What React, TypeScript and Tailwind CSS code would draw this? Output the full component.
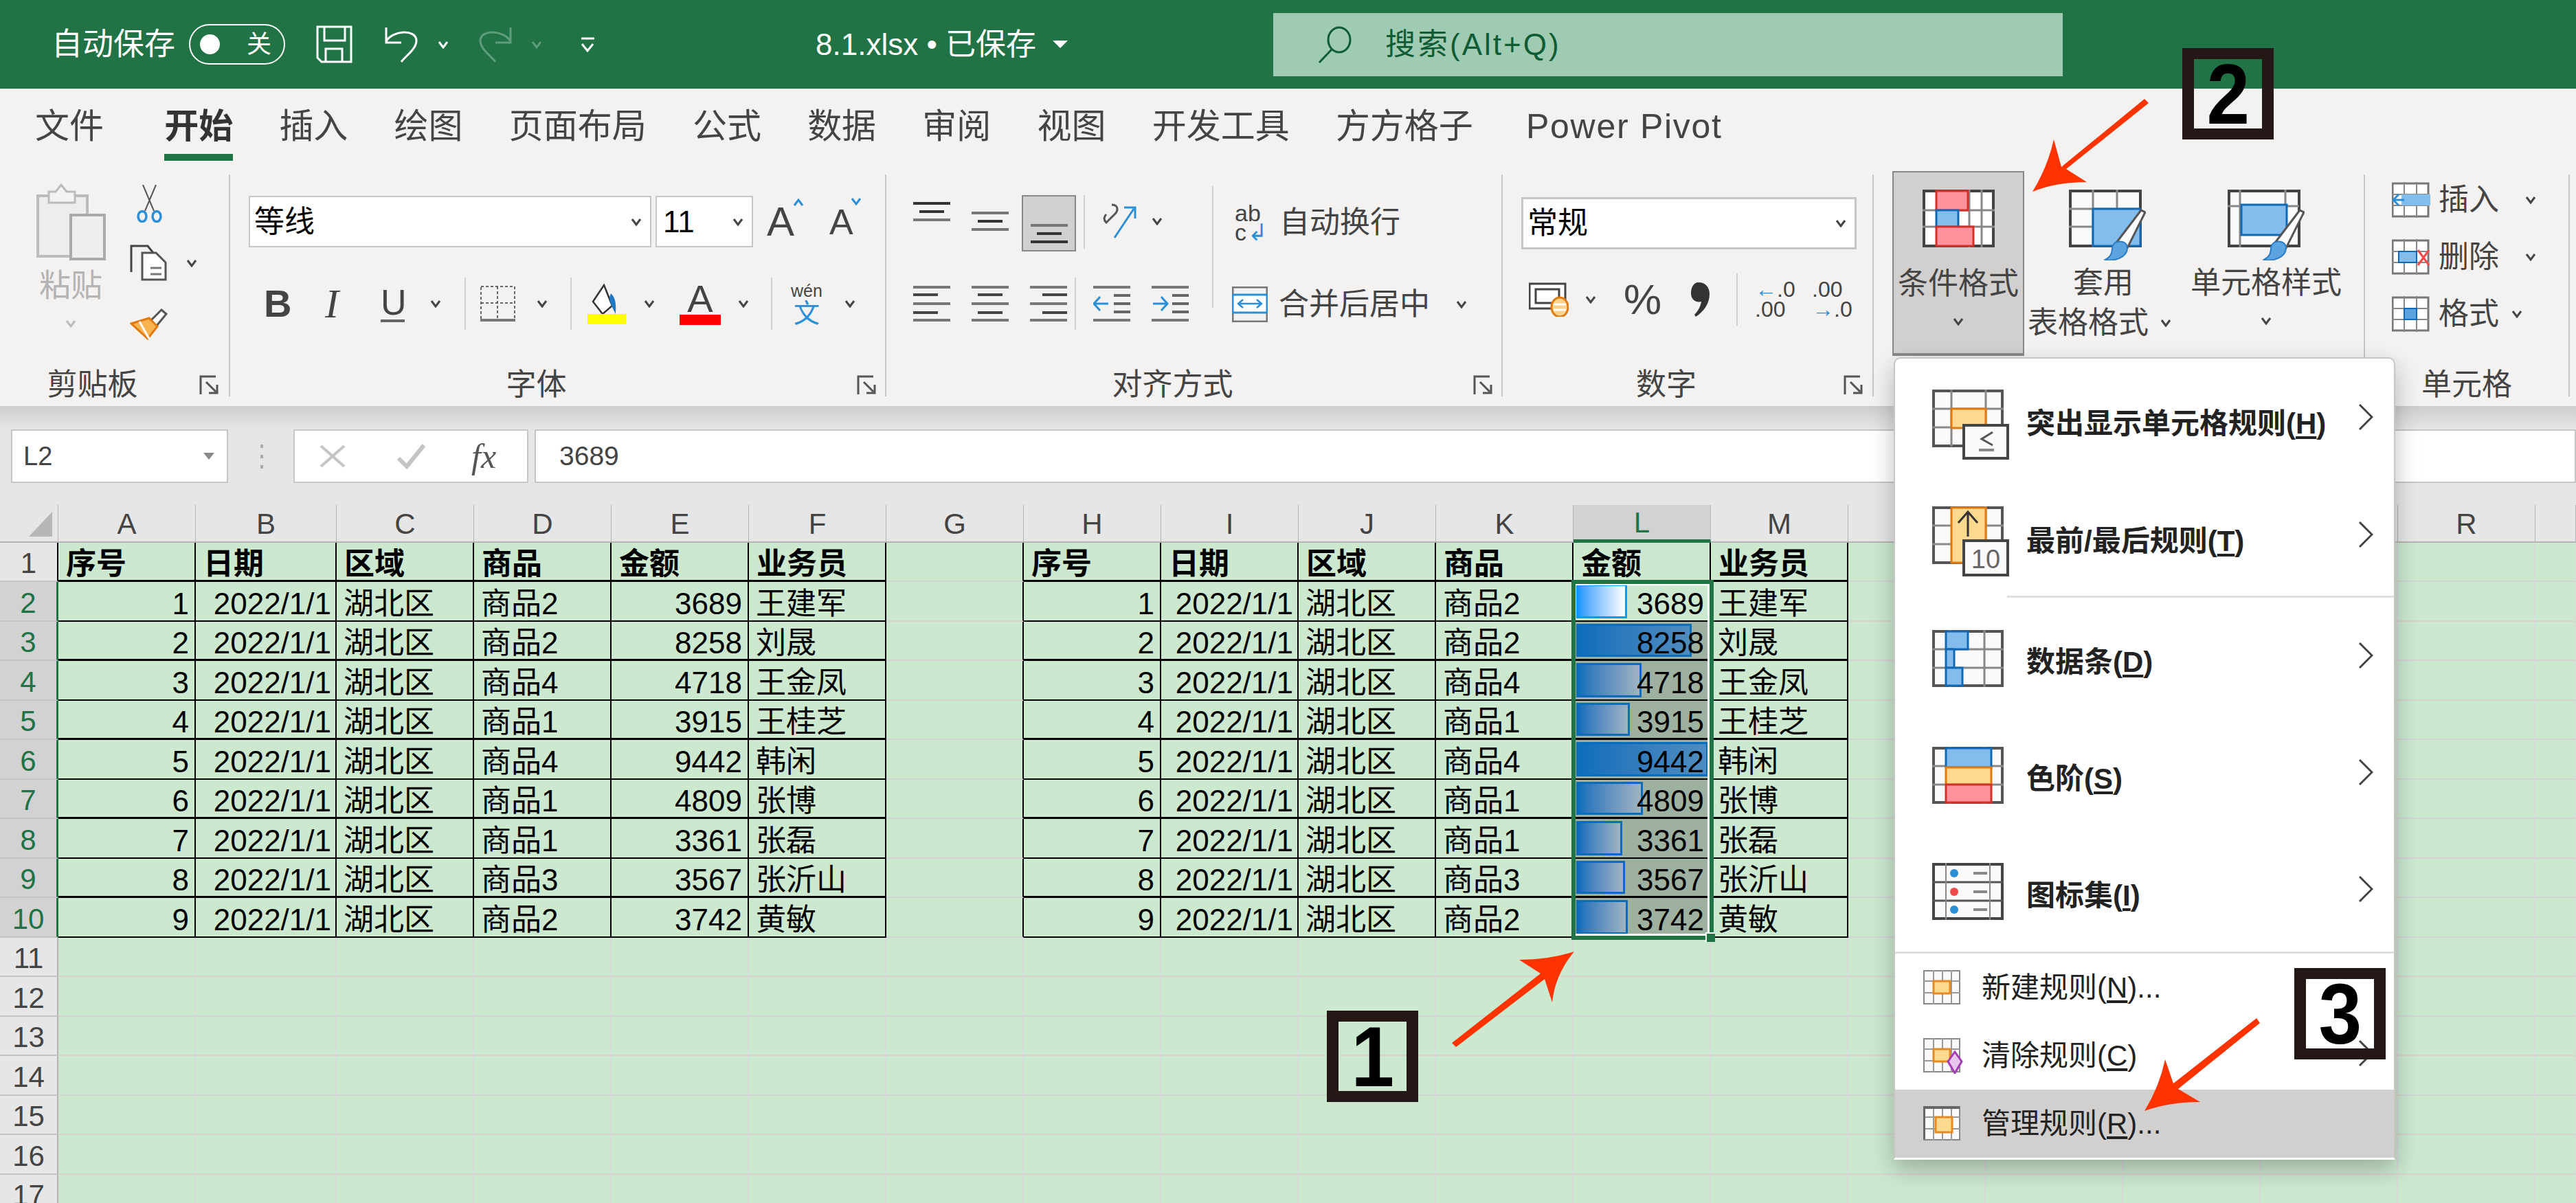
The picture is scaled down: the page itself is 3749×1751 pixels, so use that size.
import clsx from "clsx";

/* ─── Data ─── */
const sales = [
  { id: 1, amount: 3689, product: "商品2", rep: "王建军" },
  { id: 2, amount: 8258, product: "商品2", rep: "刘晟" },
  { id: 3, amount: 4718, product: "商品4", rep: "王金凤" },
  { id: 4, amount: 3915, product: "商品1", rep: "王桂芝" },
  { id: 5, amount: 9442, product: "商品4", rep: "韩闲" },
  { id: 6, amount: 4809, product: "商品1", rep: "张博" },
  { id: 7, amount: 3361, product: "商品1", rep: "张磊" },
  { id: 8, amount: 3567, product: "商品3", rep: "张沂山" },
  { id: 9, amount: 3742, product: "商品2", rep: "黄敏" },
];
const headers = ["序号", "日期", "区域", "商品", "金额", "业务员"];
const letters = "ABCDEFGHIJKLMNOPQRS".split("");
const rowNumbers = Array.from({ length: 17 }, (_, i) => i + 1);
const gridCols =
  "grid grid-cols-[85px_200px_205px_200px_200px_200px_200px_200px_200px_200px_200px_200px_200px_200px_200px_200px_200px_200px_200px_59px]";

/* ─── Small ribbon icons ─── */
function Chev({ className }: { className?: string }) {
  return (
    <svg className={clsx("h-[12px] w-[20px] shrink-0", className)} viewBox="0 0 20 12" fill="none" stroke="#444" strokeWidth={3}>
      <path d="M4 2l6 8 6-8" />
    </svg>
  );
}

function Launcher({ className }: { className?: string }) {
  return (
    <svg className={clsx("absolute bottom-[1px] h-[30px] w-[30px]", className)} viewBox="0 0 30 30" fill="none" stroke="#555" strokeWidth={3}>
      <path d="M2 28V2h22" />
      <path d="M10 10l14 14M26 14v12H14" />
    </svg>
  );
}

function Lines({ variant, className }: { variant: "top" | "middle" | "bottom" | "left" | "center" | "right"; className?: string }) {
  const short = variant === "left" ? "M0 13h36M0 39h36" : variant === "right" ? "M18 13h36M18 39h36" : "M9 13h36M9 39h36";
  if (variant === "top" || variant === "middle" || variant === "bottom") {
    return (
      <svg className={clsx("h-[28px] w-[54px]", className)} viewBox="0 0 54 28" fill="none" strokeWidth={4}>
        <path d="M0 2h54" stroke={variant === "top" ? "#333" : "#777"} />
        <path d="M9 14h36" stroke="#333" />
        <path d="M0 26h54" stroke={variant === "bottom" ? "#333" : "#777"} />
      </svg>
    );
  }
  return (
    <svg className={clsx("h-[52px] w-[54px]", className)} viewBox="0 0 54 52" fill="none" strokeWidth={4}>
      <path d="M0 2h54M0 26h54M0 50h54" stroke="#777" />
      <path d={short} stroke="#444" />
    </svg>
  );
}

function IndentIcon({ flip }: { flip?: boolean }) {
  return (
    <svg className="h-[52px] w-[54px]" viewBox="0 0 54 52" fill="none" strokeWidth={4}>
      <path d="M0 2h54M0 50h54" stroke="#777" />
      <path d="M30 14h24M30 26h24M30 38h24" stroke="#666" />
      <path d={flip ? "M2 26h20M14 16l9 10-9 10" : "M22 26H2M10 16L1 26l9 10"} stroke="#2b8fd8" strokeWidth={3} />
    </svg>
  );
}

function PasteIcon() {
  return (
    <svg className="h-[112px] w-[101px]" viewBox="0 0 101 112">
      <path d="M2 18h72v88H2z" fill="#ededed" stroke="#bbb" strokeWidth={4} />
      <path d="M18 18V12h10l8-10 8 10h12v16H18z" fill="#f3f3f3" stroke="#bbb" strokeWidth={3} />
      <rect x="50" y="46" width="49" height="64" fill="#eee" stroke="#aaa" strokeWidth={4} />
    </svg>
  );
}

function Scissors() {
  return (
    <svg className="h-[55px] w-[39px]" viewBox="0 0 39 55" fill="none">
      <path d="M10 0l16 38M29 0L13 38" stroke="#555" strokeWidth={2} />
      <ellipse cx="9" cy="46" rx="6" ry="7.5" stroke="#2b8fd8" strokeWidth={3.5} />
      <ellipse cx="30" cy="46" rx="6" ry="7.5" stroke="#2b8fd8" strokeWidth={3.5} />
    </svg>
  );
}

function CopyIcon() {
  return (
    <svg className="h-[53px] w-[54px]" viewBox="0 0 54 53" fill="#fff">
      <path d="M2 40V2h24l8 10" stroke="#444" strokeWidth={3} fill="none" />
      <path d="M18 12h20l14 14v25H18z" stroke="#555" strokeWidth={3} />
      <path d="M30 34h16M30 43h16" stroke="#777" strokeWidth={3} />
    </svg>
  );
}

function FormatPainter() {
  return (
    <svg className="h-[46px] w-[56px]" viewBox="0 0 56 46" fill="none">
      <path d="M30 18L46 2l7 6-14 17" fill="#fff" stroke="#555" strokeWidth={3} />
      <path d="M2 22l26-8 12 12-14 18z" fill="#f7b34f" stroke="#e07a10" strokeWidth={3} />
      <path d="M14 19l14 25" stroke="#fff" strokeWidth={3} />
    </svg>
  );
}

function SaveIcon() {
  return (
    <svg className="h-[55px] w-[53px]" viewBox="0 0 53 55" fill="none" stroke="#fff" strokeWidth={3}>
      <path d="M2 2h49v51H8l-6-6z" />
      <path d="M12 2v20h30V2M14 53V34h24v19" />
    </svg>
  );
}

function UndoIcon({ dim }: { dim?: boolean }) {
  return (
    <svg className="h-[54px] w-[52px]" viewBox="0 0 52 54" fill="none" stroke={dim ? "#5f9c7c" : "#fff"} strokeWidth={3}>
      {dim ? (
        <g transform="translate(52 0) scale(-1 1)">
          <path d="M4 2v22h22" />
          <path d="M4 22C14 6 46 4 48 20c1 12-14 22-22 32" />
        </g>
      ) : (
        <>
          <path d="M4 2v22h22" />
          <path d="M4 22C14 6 46 4 48 20c1 12-14 22-22 32" />
        </>
      )}
    </svg>
  );
}

function BorderIcon() {
  return (
    <svg className="h-[52px] w-[51px]" viewBox="0 0 51 52" fill="none" stroke="#666" strokeWidth={2} strokeDasharray="4 3">
      <rect x="1" y="1" width="49" height="48" />
      <path d="M25 1v48M1 25h49" />
      <path d="M0 50h51" stroke="#777" strokeWidth={4} strokeDasharray="none" />
    </svg>
  );
}

function FillIcon() {
  return (
    <svg className="h-[59px] w-[58px]" viewBox="0 0 58 59">
      <path d="M26 2l12 30-14 12-14-18z" fill="#fff" stroke="#333" strokeWidth={2.5} />
      <path d="M36 14c6 6 8 12 7 30-4-8-8-14-9-24z" fill="#1f78c4" />
      <rect x="2" y="44" width="57" height="15" fill="#ffff00" />
    </svg>
  );
}

function SearchIcon() {
  return (
    <svg className="h-[54px] w-[49px]" viewBox="0 0 49 54" fill="none" stroke="#0f5c34" strokeWidth={3}>
      <ellipse cx="31" cy="20" rx="16" ry="18" />
      <path d="M20 34L2 53" />
    </svg>
  );
}

function AccountingIcon() {
  return (
    <svg className="h-[50px] w-[58px]" viewBox="0 0 58 50">
      <path d="M1 2h52v36H1z" fill="#fff" stroke="#444" strokeWidth={3} />
      <path d="M10 10h34v20H10z" fill="none" stroke="#444" strokeWidth={3} />
      <ellipse cx="45" cy="36" rx="12" ry="14" fill="#fbd38d" stroke="#e07a10" strokeWidth={3} />
      <path d="M36 32h18M36 40h18" stroke="#fff" strokeWidth={3} />
    </svg>
  );
}

function CommaIcon() {
  return (
    <svg className="h-[50px] w-[29px]" viewBox="0 0 29 50">
      <path d="M12 0c10 0 16 7 16 17 0 14-9 26-20 33l-2-3c5-5 9-12 10-19-8 2-15-3-15-12C1 7 5 0 12 0z" fill="#333" />
    </svg>
  );
}

function Brush() {
  return (
    <g>
      <path d="M70 76L105 30l6 3-26 52z" fill="#fff" stroke="#555" strokeWidth={3} />
      <path d="M70 76c10-2 15 3 15 9 0 14-20 20-32 17 8-4 10-10 10-16 0-5 3-9 7-10z" fill="#5ba4e0" stroke="#2b7cc4" strokeWidth={2} />
    </g>
  );
}

function ConditionalIcon() {
  return (
    <svg className="h-[84px] w-[105px]" viewBox="0 0 105 84">
      <rect x="2" y="2" width="101" height="80" fill="#fff" stroke="#444" strokeWidth={4} />
      <path d="M0 30h105M0 54h105M68 0v84M86 0v84" stroke="#888" strokeWidth={3} />
      <rect x="20" y="2" width="46" height="28" fill="#ff929b" stroke="#d2302a" strokeWidth={3} />
      <rect x="20" y="30" width="32" height="24" fill="#83bdee" stroke="#1268b3" strokeWidth={3} />
      <rect x="20" y="54" width="54" height="28" fill="#ff929b" stroke="#d2302a" strokeWidth={3} />
    </svg>
  );
}

function TableFormatIcon() {
  return (
    <svg className="h-[103px] w-[112px]" viewBox="0 0 112 103">
      <rect x="2" y="2" width="102" height="80" fill="#fafafa" stroke="#444" strokeWidth={4} />
      <path d="M0 28h104M0 54h104M35 0v84M70 0v84" stroke="#888" strokeWidth={3} />
      <rect x="35" y="28" width="69" height="54" fill="#83bdee" stroke="#1268b3" strokeWidth={3} />
      <Brush />
    </svg>
  );
}

function CellStyleIcon() {
  return (
    <svg className="h-[103px] w-[112px]" viewBox="0 0 112 103">
      <rect x="2" y="2" width="102" height="80" fill="#fafafa" stroke="#444" strokeWidth={4} />
      <path d="M0 24h104M18 0v84M84 0v24" stroke="#888" strokeWidth={3} />
      <rect x="20" y="22" width="66" height="44" fill="#83bdee" stroke="#1268b3" strokeWidth={3} />
      <Brush />
    </svg>
  );
}

function CellsIcon({ kind }: { kind: "insert" | "delete" | "format" }) {
  return (
    <svg className="h-[52px] w-[57px]" viewBox="0 0 57 52">
      <rect x="1" y="2" width="52" height="48" fill="#fff" stroke="#777" strokeWidth={3} />
      <path d="M0 18h54M0 34h54M18 0v52M36 0v52" stroke="#888" strokeWidth={2} />
      {kind === "insert" && (
        <>
          <rect x="14" y="18" width="42" height="16" fill="#83bdee" />
          <path d="M18 26H2M10 18l-8 8 8 8" stroke="#2b8fd8" strokeWidth={3} fill="none" />
        </>
      )}
      {kind === "delete" && (
        <>
          <rect x="10" y="18" width="26" height="16" fill="#83bdee" stroke="#1268b3" strokeWidth={2} />
          <path d="M38 16l16 22M54 16L38 38" stroke="#f04a4a" strokeWidth={3} />
        </>
      )}
      {kind === "format" && <rect x="18" y="18" width="18" height="16" fill="#5ba4e0" stroke="#1268b3" strokeWidth={2} />}
    </svg>
  );
}

/* ─── Menu icons ─── */
function MenuGrid({ children, className }: { children?: React.ReactNode; className: string }) {
  return (
    <svg className={className} viewBox="0 0 104 83">
      <rect x="2" y="2" width="100" height="79" fill="#fafafa" stroke="#555" strokeWidth={4} />
      <path d="M0 28h104M0 55h104M26 0v83M76 0v83" stroke="#888" strokeWidth={3} />
      {children}
    </svg>
  );
}

function HighlightIcon() {
  return (
    <svg className="h-[102px] w-[112px]" viewBox="0 0 112 102">
      <rect x="2" y="2" width="100" height="80" fill="#fafafa" stroke="#555" strokeWidth={4} />
      <path d="M0 28h104M0 55h104M28 0v83M78 0v83" stroke="#888" strokeWidth={3} />
      <rect x="28" y="28" width="50" height="28" fill="#fbd98f" stroke="#e07a10" strokeWidth={3} />
      <rect x="46" y="52" width="64" height="48" fill="#fafafa" stroke="#444" strokeWidth={4} />
      <path d="M88 62L72 72l16 9" fill="none" stroke="#555" strokeWidth={3} />
      <path d="M68 88h22" stroke="#888" strokeWidth={4} />
    </svg>
  );
}

function TopBottomIcon() {
  return (
    <svg className="h-[102px] w-[112px]" viewBox="0 0 112 102">
      <rect x="2" y="2" width="100" height="80" fill="#fafafa" stroke="#555" strokeWidth={4} />
      <path d="M0 28h104M0 55h104M78 0v83" stroke="#888" strokeWidth={3} />
      <rect x="28" y="2" width="50" height="80" fill="#fbd98f" stroke="#e07a10" strokeWidth={3} />
      <path d="M52 44V8M38 24L52 8l14 16" fill="none" stroke="#333" strokeWidth={3} />
      <rect x="46" y="50" width="64" height="50" fill="#fafafa" stroke="#444" strokeWidth={4} />
      <text x="78" y="90" textAnchor="middle" fontSize="38" fill="#666" fontFamily="Liberation Sans, sans-serif">10</text>
    </svg>
  );
}

function SmallRuleIcon({ kind }: { kind: "new" | "clear" | "manage" }) {
  return (
    <svg className="h-[52px] w-[58px]" viewBox="0 0 58 52">
      <rect x="1" y="1" width="52" height="48" fill="#fafafa" stroke="#888" strokeWidth={2} />
      <path d="M0 16h54M0 33h54M15 0v50M28 0v50M41 0v50" stroke="#999" strokeWidth={2} />
      {kind === "manage" && <path d="M1 48V2h52" fill="none" stroke="#666" strokeWidth={4} />}
      <rect x={kind === "manage" ? 18 : 15} y="16" width="24" height={kind === "manage" ? 22 : 18} fill="#fbd98f" stroke="#e58a20" strokeWidth={3} />
      {kind === "clear" && <path d="M36 34l10-14 10 14-10 17z" fill="#e8c7ee" stroke="#a23db5" strokeWidth={3} />}
    </svg>
  );
}

function MenuChevron() {
  return (
    <svg className="absolute right-[30px] -mt-[8px] h-[38px] w-[22px]" viewBox="0 0 22 38" fill="none" stroke="#444" strokeWidth={3}>
      <path d="M2 1l18 18L2 37" />
    </svg>
  );
}

/* ─── Ribbon group frame ─── */
function Group({
  width,
  label,
  launcher,
  labelPad,
  children,
}: {
  width: string;
  label: string;
  launcher?: string;
  labelPad?: string;
  children: React.ReactNode;
}) {
  return (
    <div className={clsx(width, "relative my-[14px] flex shrink-0 flex-col border-r-2 border-[#c8c6c4]")}>
      <div className="min-h-0 flex-1">{children}</div>
      <div className={clsx("flex h-[46px] items-center justify-center pt-[12px] text-[44px] leading-none text-[#444]", labelPad)}>{label}</div>
      {launcher && <Launcher className={launcher} />}
    </div>
  );
}

function TitleBar() {
  return (
    <div className="flex h-[129px] items-center bg-[#217346] pl-[75px] text-white">
      <span className="w-[182px] whitespace-nowrap text-[45px] leading-none">自动保存</span>
      <div className="ml-[18px] flex h-[59px] w-[140px] items-center justify-between rounded-full border-2 border-white pl-[14px] pr-[18px]">
        <span className="h-[29px] w-[29px] rounded-full bg-white" />
        <span className="text-[36px] leading-none">关</span>
      </div>
      <div className="ml-[45px]"><SaveIcon /></div>
      <div className="ml-[45px]"><UndoIcon /></div>
      <Chev className="ml-[25px] [&_path]:stroke-white" />
      <div className="ml-[40px]"><UndoIcon dim /></div>
      <Chev className="ml-[24px] [&_path]:stroke-[#5f9c7c]" />
      <svg className="ml-[52px] h-[22px] w-[25px]" viewBox="0 0 25 22" fill="none" stroke="#fff" strokeWidth={3}>
        <path d="M3 2h19M4 10l8 10 8-10" />
      </svg>
      <div className="ml-[319px] flex w-[666px] items-center">
        <span className="text-[44px] leading-none">8.1.xlsx • 已保存</span>
        <svg className="ml-[24px] h-[11px] w-[22px]" viewBox="0 0 22 11"><path d="M0 0h22L11 11z" fill="#fff" /></svg>
      </div>
      <div className="flex h-[92px] w-[1149px] items-center bg-[#9fcbb3] pl-[65px] text-[#0f5c34]">
        <SearchIcon />
        <span className="ml-[49px] text-[44px] leading-none tracking-[3px]">搜索(Alt+Q)</span>
      </div>
    </div>
  );
}

function Tabs() {
  return (
    <div className="flex h-[111px] items-start gap-[67.2px] bg-[#f3f2f1] pl-[51px] pt-[28px] text-[50px] leading-[54px] text-[#444]">
      <span className="mr-[21px]">文件</span>
      <span className="relative font-bold text-[#333]">
        开始
        <span className="absolute inset-x-0 top-[67px] h-[10px] bg-[#217346]" />
      </span>
      <span>插入</span>
      <span>绘图</span>
      <span>页面布局</span>
      <span>公式</span>
      <span>数据</span>
      <span>审阅</span>
      <span>视图</span>
      <span>开发工具</span>
      <span>方方格子</span>
      <span className="ml-[10px] tracking-[1.7px]">Power Pivot</span>
    </div>
  );
}

function Ribbon() {
  return (
    <div className="flex h-[351px] bg-[#f3f2f1]">
      {/* Clipboard */}
      <Group width="w-[335px]" label="剪贴板" launcher="left-[290px]" labelPad="pr-[64px]">
        <div className="flex">
          <div className="ml-[50px] flex w-[106px] flex-col items-center pt-[13px]">
            <PasteIcon />
            <span className="mt-[8px] text-[46px] leading-[56px] text-[#b4b4b4]">粘贴</span>
            <Chev className="mt-[22px] [&_path]:stroke-[#bbb]" />
          </div>
          <div className="ml-[33px] flex flex-col pt-[15px]">
            <div className="ml-[9px]"><Scissors /></div>
            <div className="mt-[32px] flex items-center">
              <CopyIcon />
              <Chev className="ml-[26px]" />
            </div>
            <div className="mt-[40px]"><FormatPainter /></div>
          </div>
        </div>
      </Group>

      {/* Font */}
      <Group width="w-[955px]" label="字体" launcher="left-[912px]" labelPad="pr-[62px]">
        <div className="flex items-center pl-[27px] pt-[31px]">
          <div className="flex h-[75px] w-[586px] items-center justify-between border-2 border-[#c8c6c4] bg-white pl-[6px] pr-[10px] text-[44px] text-black">
            <span>等线</span>
            <Chev />
          </div>
          <div className="ml-[6px] flex h-[75px] w-[142px] items-center justify-between border-2 border-[#c8c6c4] bg-white pl-[9px] pr-[10px] text-[44px] text-black">
            <span>11</span>
            <Chev />
          </div>
          <div className="relative ml-[20px] w-[54px] text-[60px] leading-none text-[#444]">
            A
            <svg className="absolute right-0 top-[-4px] h-[12px] w-[16px]" viewBox="0 0 16 12" fill="none" stroke="#2b8fd8" strokeWidth={3}><path d="M2 10l6-8 6 8" /></svg>
          </div>
          <div className="relative ml-[37px] w-[47px] text-[52px] leading-none text-[#444]">
            A
            <svg className="absolute right-0 top-[-10px] h-[12px] w-[16px]" viewBox="0 0 16 12" fill="none" stroke="#2b8fd8" strokeWidth={3}><path d="M2 2l6 8 6-8" /></svg>
          </div>
        </div>
        <div className="mt-[44px] flex h-[76px] items-center text-[#444]">
          <span className="ml-[49px] w-[34px] text-[56px] font-bold leading-none">B</span>
          <span className="ml-[55px] w-[27px] font-['Liberation_Serif',serif] text-[60px] italic leading-none">I</span>
          <span className="ml-[54px] w-[35px] border-b-4 border-[#666] text-[52px] leading-[50px]">U</span>
          <Chev className="ml-[35px]" />
          <span className="ml-[32px] h-full w-[2px] bg-[#d2d0ce]" />
          <div className="ml-[21px]"><BorderIcon /></div>
          <Chev className="ml-[29px]" />
          <span className="ml-[31px] h-full w-[2px] bg-[#d2d0ce]" />
          <div className="ml-[21px]"><FillIcon /></div>
          <Chev className="ml-[24px]" />
          <div className="ml-[34px] flex w-[60px] flex-col items-center">
            <span className="text-[56px] leading-[46px]">A</span>
            <span className="h-[15px] w-full bg-[#ff0000]" />
          </div>
          <Chev className="ml-[23px]" />
          <span className="ml-[30px] h-full w-[2px] bg-[#d2d0ce]" />
          <div className="ml-[25px] flex w-[50px] flex-col items-center leading-none">
            <span className="text-[25px] leading-[28px]">wén</span>
            <span className="text-[38px] leading-[38px] text-[#2b8fd8]">文</span>
          </div>
          <Chev className="ml-[28px]" />
        </div>
      </Group>

      {/* Alignment */}
      <Group width="w-[897px]" label="对齐方式" launcher="left-[854px]" labelPad="pr-[62px]">
        <div className="flex h-full">
          <div className="mb-[83px] mt-[17px] w-[476px] border-r-2 border-[#d2d0ce]">
            <div className="mt-[13px] flex h-[82px] items-start">
              <Lines variant="top" className="ml-[39px] mt-[10px]" />
              <Lines variant="middle" className="ml-[31px] mt-[24px]" />
              <div className="ml-[19px] flex h-[82px] w-[79px] items-end justify-center border-2 border-[#8a8886] bg-[#d2d0ce] pb-[10px]">
                <Lines variant="bottom" />
              </div>
              <span className="ml-[11px] h-[78px] w-[2px] bg-[#d2d0ce]" />
              <svg className="ml-[25px] mt-[12px] h-[52px] w-[53px]" viewBox="0 0 53 52" fill="none">
                <path d="M14 2c8 0 10 6 6 12L6 28c-4-4-4-8 0-12" stroke="#555" strokeWidth={3} />
                <path d="M18 50L46 8M32 6h16v16" stroke="#2b8fd8" strokeWidth={3} />
              </svg>
              <Chev className="ml-[17px] mt-[32px]" />
            </div>
            <div className="mt-[38px] flex h-[76px] items-center">
              <Lines variant="left" className="ml-[39px]" />
              <Lines variant="center" className="ml-[31px]" />
              <Lines variant="right" className="ml-[31px]" />
              <span className="ml-[11px] h-full w-[2px] bg-[#d2d0ce]" />
              <div className="ml-[25px]"><IndentIcon /></div>
              <div className="ml-[31px]"><IndentIcon flip /></div>
            </div>
          </div>
          <div className="flex flex-col">
            <div className="ml-[31px] mt-[44px] flex h-[52px] items-center">
              <div className="flex w-[52px] flex-col text-[34px] leading-[28px] text-[#444]">
                <span>ab</span>
                <span>c<span className="ml-[2px] text-[#2b8fd8]">↲</span></span>
              </div>
              <span className="ml-[13px] text-[44px] leading-none text-[#444]">自动换行</span>
            </div>
            <div className="ml-[27px] mt-[67px] flex h-[52px] items-center">
              <svg className="h-[52px] w-[52px]" viewBox="0 0 52 52" fill="none">
                <rect x="1" y="1" width="50" height="50" stroke="#777" strokeWidth={3} />
                <rect x="1" y="12" width="50" height="26" fill="#fff" stroke="#2b8fd8" strokeWidth={3} />
                <path d="M10 25h32M16 19l-7 6 7 6M36 19l7 6-7 6" stroke="#2b8fd8" strokeWidth={2.5} />
              </svg>
              <span className="ml-[16px] text-[44px] leading-none text-[#444]">合并后居中</span>
              <Chev className="ml-[36px]" />
            </div>
          </div>
        </div>
      </Group>

      {/* Number */}
      <Group width="w-[540px]" label="数字" launcher="left-[496px]" labelPad="pr-[62px]">
        <div className="pl-[27px] pt-[33px]">
          <div className="flex h-[76px] w-[488px] items-center justify-between border-[3px] border-[#c8c6c4] bg-white pl-[6px] pr-[10px] text-[44px] text-black">
            <span>常规</span>
            <Chev />
          </div>
        </div>
        <div className="mt-[35px] flex h-[76px] items-center text-[#444]">
          <div className="ml-[38px]"><AccountingIcon /></div>
          <Chev className="ml-[22px]" />
          <span className="ml-[38px] w-[52px] text-[62px] font-light leading-none">%</span>
          <div className="ml-[45px]"><CommaIcon /></div>
          <span className="ml-[38px] h-full w-[2px] bg-[#d2d0ce]" />
          <div className="ml-[25px] flex w-[56px] flex-col text-[32px] leading-[29px]">
            <span><span className="text-[#2b8fd8]">←</span>.0</span>
            <span>.00</span>
          </div>
          <div className="ml-[27px] flex w-[56px] flex-col text-[32px] leading-[29px]">
            <span>.00</span>
            <span><span className="text-[#2b8fd8]">→</span>.0</span>
          </div>
        </div>
      </Group>

      {/* Styles */}
      <Group width="w-[715px]" label="样式" labelPad="pr-[62px]">
        <div className="flex items-start">
          <div className="-mt-[5px] ml-[27px] flex h-[269px] w-[192px] flex-col items-center border-2 border-b-4 border-[#8a8886] bg-[#d2d0ce] pt-[25px]">
            <ConditionalIcon />
            <span className="mt-[30px] text-[44px] leading-[46px] text-[#444]">条件格式</span>
            <Chev className="mt-[26px]" />
          </div>
          <div className="ml-[5px] flex w-[225px] flex-col pt-[22px]">
            <div className="ml-[60px]"><TableFormatIcon /></div>
            <span className="ml-[66px] mt-[10px] text-[44px] leading-[46px] text-[#444]">套用</span>
            <div className="mt-[12px] flex items-center">
              <span className="text-[44px] leading-[46px] text-[#444]">表格格式</span>
              <Chev className="ml-[15px]" />
            </div>
          </div>
          <div className="ml-[10px] flex w-[224px] flex-col items-center pt-[22px]">
            <CellStyleIcon />
            <span className="mt-[10px] text-[44px] leading-[46px] text-[#444]">单元格样式</span>
            <Chev className="mt-[26px]" />
          </div>
        </div>
      </Group>

      {/* Cells */}
      <Group width="w-[298px]" label="单元格">
        <div className="flex flex-col gap-[31px] pl-[39px] pt-[11px] text-[#444]">
          <div className="flex h-[52px] items-center">
            <CellsIcon kind="insert" />
            <span className="ml-[11px] text-[44px] leading-none">插入</span>
            <Chev className="ml-[36px]" />
          </div>
          <div className="flex h-[52px] items-center">
            <CellsIcon kind="delete" />
            <span className="ml-[11px] text-[44px] leading-none">删除</span>
            <Chev className="ml-[36px]" />
          </div>
          <div className="flex h-[52px] items-center">
            <CellsIcon kind="format" />
            <span className="ml-[11px] text-[44px] leading-none">格式</span>
            <Chev className="ml-[16px]" />
          </div>
        </div>
      </Group>
    </div>
  );
}

function FormulaBar() {
  return (
    <div className="h-[144px] bg-[#e6e6e6]">
      <div className="h-[34px] bg-gradient-to-b from-[#cdcdcd] to-[#e6e6e6]" />
      <div className="flex h-[78px]">
        <div className="ml-[16px] flex w-[316px] items-center justify-between border-2 border-[#c8c6c4] bg-white pl-[16px] pr-[18px] text-[38px] text-[#444]">
          <span>L2</span>
          <svg className="h-[10px] w-[16px]" viewBox="0 0 16 10"><path d="M0 0h16L8 10z" fill="#888" /></svg>
        </div>
        <div className="ml-[47px] flex w-[4px] flex-col justify-center gap-[10px]">
          <span className="h-[5px] bg-[#aaa]" />
          <span className="h-[5px] bg-[#aaa]" />
          <span className="h-[5px] bg-[#aaa]" />
        </div>
        <div className="ml-[44px] flex w-[342px] items-center border-2 border-[#c8c6c4] bg-white">
          <svg className="ml-[36px] h-[34px] w-[38px]" viewBox="0 0 38 34" fill="none" stroke="#c4c4c4" strokeWidth={4}><path d="M2 2l34 30M36 2L2 32" /></svg>
          <svg className="ml-[74px] h-[38px] w-[43px]" viewBox="0 0 43 38" fill="none" stroke="#c4c4c4" strokeWidth={6}><path d="M3 22l12 12L40 3" /></svg>
          <span className="ml-[66px] font-['Liberation_Serif',serif] text-[50px] italic leading-none text-[#555]">fx</span>
        </div>
        <div className="ml-[9px] flex flex-1 items-center border-2 border-[#c8c6c4] bg-white pl-[34px] text-[39px] text-[#444]">3689</div>
      </div>
    </div>
  );
}

function ColumnHeaders() {
  return (
    <div className={clsx(gridCols, "h-[54.5px] bg-[#e6e6e6]")}>
      <div className="relative border-r border-b-2 border-[#b5b5b5]">
        <svg className="absolute left-[42px] top-[10px] h-[36px] w-[34px]" viewBox="0 0 34 36"><path d="M34 0v36H0z" fill="#b7b7b7" /></svg>
      </div>
      {letters.map((l) => (
        <div
          key={l}
          className={clsx(
            "flex items-center justify-center border-r pt-[3px] text-[42px] leading-none",
            l === "L"
              ? "border-b-[5px] border-r-[#b5b5b5] border-b-[#217346] bg-[#d2d2d2] text-[#217346]"
              : "border-b-2 border-[#b5b5b5] text-[#444]"
          )}
        >
          {/* column S starts at the window edge, its letter falls outside */}
          {l === "S" ? null : l}
        </div>
      ))}
    </div>
  );
}

/* ─── Worksheet body ─── */
function cellText(r: number, col: number) {
  if (r === 1) return headers[col];
  const row = sales[r - 2];
  return [row.id, "2022/1/1", "湖北区", row.product, row.amount, row.rep][col];
}

function SheetRow({ r }: { r: number }) {
  const inTable = r <= 10;
  const selected = r >= 2 && r <= 10;
  const thick = r % 2 === 1;
  return (
    <div className={clsx(gridCols, "h-[57.5px] bg-[#cce8cf]")}>
      <div
        className={clsx(
          "flex items-center justify-center border-b-2 border-b-[#c4c4c4] pt-[6px] text-[42px] leading-none",
          selected ? "border-r-[3px] border-r-[#217346] bg-[#d2d2d2] text-[#217346]" : "border-r-2 bg-[#e6e6e6] text-[#444]",
          !selected && (r === 1 ? "border-r-black" : "border-r-[#b5b5b5]")
        )}
      >
        {r}
      </div>
      {letters.map((l, i) => {
        const first = i <= 5;
        const second = i >= 7 && i <= 12;
        const col = first ? i : i - 7;
        if (inTable && (first || second)) {
          const text = cellText(r, col);
          const numeric = r > 1 && (col === 0 || col === 1 || col === 4);
          const isAmount = r > 1 && second && col === 4;
          const amount = r > 1 ? sales[r - 2].amount : 0;
          return (
            <div
              key={l}
              className={clsx(
                "relative flex items-center overflow-hidden border-r-2 border-r-black border-b-black pt-[8px] text-[44px] leading-none text-black",
                thick ? "border-b-[3px]" : "border-b-2",
                r === 1 ? "pl-[11px] font-bold" : numeric ? (col === 1 ? "justify-end pr-[6px]" : "justify-end pr-[8px]") : "pl-[10px]",
                isAmount && r > 2 && "bg-[#9eb1a0]"
              )}
            >
              {isAmount && (
                <span
                  className={clsx(
                    "absolute bottom-[3px] left-[4px] top-[3px] border-[3px] bg-gradient-to-r",
                    r === 2
                      ? "border-[#0f97fb] from-[#0f97fb] to-white"
                      : amount > 8000
                        ? "border-[#0a6dbb] from-[#0a6dbb] to-[#4f8cbf]"
                        : "border-[#0a6dbb] from-[#0a6dbb] to-[#a0b3c2]"
                  )}
                  style={{ width: 67 + ((amount - 3361) * 125) / 6081 }}
                />
              )}
              <span className="relative">{text}</span>
            </div>
          );
        }
        return (
          <div
            key={l}
            className={clsx(
              "border-b-2 border-b-[#d6d3d3] border-r-2",
              inTable && l === "G" ? "border-r-black" : "border-r-[#d6dcd6]"
            )}
          />
        );
      })}
    </div>
  );
}

/* ─── Conditional-format menu ─── */
function MenuRow({
  height,
  iconPad,
  icon,
  label,
  hot,
}: {
  height: string;
  iconPad?: string;
  icon: React.ReactNode;
  label: string;
  hot: string;
}) {
  return (
    <div className={clsx(height, "relative flex items-center pl-[54px]")}>
      <div className={clsx("flex w-[137px] shrink-0", iconPad)}>{icon}</div>
      <span className="pt-[12px] text-[42px] font-bold leading-none text-[#222]">
        {label}(<span className="underline underline-offset-4">{hot}</span>)
      </span>
      <MenuChevron />
    </div>
  );
}

function SmallRow({ kind, label, hot, active, chevron }: { kind: "new" | "clear" | "manage"; label: string; hot: string; active?: boolean; chevron?: boolean }) {
  return (
    <div className={clsx("relative flex h-[99px] items-center pl-[41px]", active && "bg-[#d2d0ce]")}>
      <SmallRuleIcon kind={kind} />
      <span className="ml-[27px] text-[42px] leading-none text-[#222]">
        {label}(<span className="underline underline-offset-4">{hot}</span>){chevron ? "" : "..."}
      </span>
      {chevron && <MenuChevron />}
    </div>
  );
}

function CfMenu() {
  return (
    <div className="absolute left-[2756px] top-[520px] w-[730px] overflow-hidden rounded-t-[10px] border-2 border-b-[3px] border-[#c8c6c4] border-b-white bg-white pt-[3px] shadow-[0_14px_34px_rgba(0,0,0,0.25)]">
      <MenuRow height="h-[172px]" iconPad="pt-[14px]" icon={<HighlightIcon />} label="突出显示单元格规则" hot="H" />
      <MenuRow height="h-[170px]" iconPad="pt-[11px]" icon={<TopBottomIcon />} label="最前/最后规则" hot="T" />
      <div className="ml-[163px] h-[3px] bg-[#e1dfdd]" />
      <MenuRow
        height="h-[176px]"
        icon={
          <MenuGrid className="h-[83px] w-[104px]">
            <rect x="20" y="2" width="32" height="26" fill="#83bdee" stroke="#1268b3" strokeWidth={3} />
            <rect x="20" y="28" width="12" height="27" fill="#83bdee" stroke="#1268b3" strokeWidth={3} />
            <rect x="20" y="55" width="24" height="26" fill="#83bdee" stroke="#1268b3" strokeWidth={3} />
          </MenuGrid>
        }
        label="数据条"
        hot="D"
      />
      <MenuRow
        height="h-[164px]"
        icon={
          <MenuGrid className="h-[83px] w-[104px]">
            <rect x="20" y="2" width="66" height="28" fill="#83bdee" stroke="#1268b3" strokeWidth={3} />
            <rect x="20" y="30" width="66" height="25" fill="#fbd98f" stroke="#e07a10" strokeWidth={3} />
            <rect x="20" y="55" width="66" height="26" fill="#ff929b" stroke="#d2302a" strokeWidth={3} />
          </MenuGrid>
        }
        label="色阶"
        hot="S"
      />
      <MenuRow
        height="h-[175px]"
        icon={
          <svg className="h-[83px] w-[104px]" viewBox="0 0 104 83">
            <rect x="2" y="2" width="100" height="79" fill="#fafafa" stroke="#444" strokeWidth={4} />
            <path d="M0 28h104M0 55h104" stroke="#555" strokeWidth={3} />
            <path d="M20 0v83M84 0v83" stroke="#888" strokeWidth={2} />
            <circle cx="32" cy="15" r="6" fill="#2b8fd8" />
            <circle cx="32" cy="42" r="6" fill="#f04a4a" />
            <circle cx="32" cy="68" r="6" fill="#2b8fd8" />
            <path d="M60 15h20M60 42h20M60 68h20" stroke="#888" strokeWidth={4} />
          </svg>
        }
        label="图标集"
        hot="I"
      />
      <div className="h-[3px] bg-[#e1dfdd]" />
      <SmallRow kind="new" label="新建规则" hot="N" />
      <SmallRow kind="clear" label="清除规则" hot="C" chevron />
      <SmallRow kind="manage" label="管理规则" hot="R" active />
    </div>
  );
}

/* ─── Annotations laid over the screenshot ─── */
function NumberBox({ n, className }: { n: number; className: string }) {
  return (
    <div className={clsx("absolute flex h-[133px] w-[133px] items-center justify-center border-x-[17px] border-y-[16px] border-[#231815] text-[125px] font-bold leading-none text-black", className)}>
      <span className="inline-block scale-x-90">{n}</span>
    </div>
  );
}

function Arrows() {
  return (
    <svg className="pointer-events-none absolute left-0 top-0 h-[1751px] w-[3749px]" viewBox="0 0 3749 1751" fill="#ff3300">
      <path d="M2113 1518l6 6 129-99 11 34q4-40 32-74-38 12-80 12l31 20z" />
      <path d="M3121 144l6 6-120 96 30 19q-45 0-79 14 22-36 31-76l11 40z" />
      <path d="M3284 1482l5 7-119 96 32 19q-45 0-81 13 22-36 30-75l12 35z" />
    </svg>
  );
}

function SelectionFrame() {
  return (
    <div className="absolute left-[2287px] top-[844px] h-[524px] w-[207px] border-[6px] border-[#217346]">
      <span className="absolute inset-y-0 right-0 w-[3px] bg-white" />
      <span className="absolute inset-x-0 bottom-0 h-[3px] bg-white" />
      <span className="absolute inset-x-0 top-0 h-[2px] bg-white" />
      <span className="absolute bottom-[-9px] right-[-8px] h-[14px] w-[14px] border-t-2 border-l-2 border-white bg-[#217346]" />
    </div>
  );
}

export default function App() {
  return (
    <div className="relative h-[1751px] w-[3749px] overflow-hidden bg-[#cce8cf] font-['Liberation_Sans','Noto_Sans_CJK_SC',sans-serif]">
      <TitleBar />
      <Tabs />
      <Ribbon />
      <FormulaBar />
      <ColumnHeaders />
      {rowNumbers.map((r) => (
        <SheetRow key={r} r={r} />
      ))}
      <SelectionFrame />
      <CfMenu />
      <NumberBox n={2} className="left-[3176px] top-[70px]" />
      <NumberBox n={1} className="left-[1931px] top-[1471px]" />
      <NumberBox n={3} className="left-[3339px] top-[1409px]" />
      <Arrows />
    </div>
  );
}
